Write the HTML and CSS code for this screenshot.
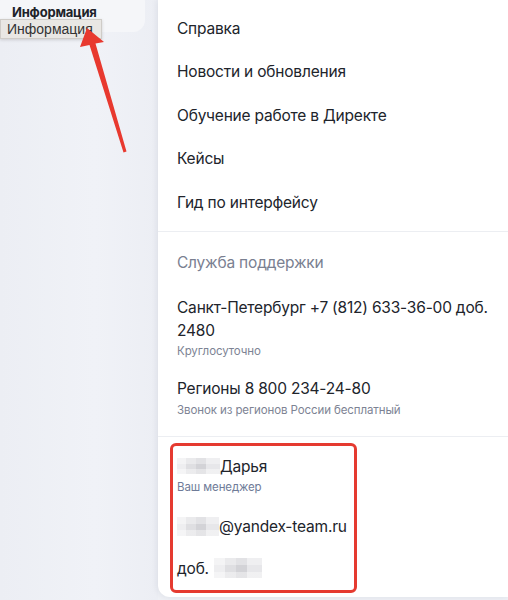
FILE: index.html
```html
<!DOCTYPE html>
<html lang="ru">
<head>
<meta charset="utf-8">
<title>Информация</title>
<link rel="stylesheet" href="styles.css">
</head>
<body>
<div class="page">
  <aside class="sidebar">
    <div class="side-item">Информация</div>
  </aside>
  <main class="menu">
    <ul class="links">
      <li>Справка</li>
      <li>Новости и обновления</li>
      <li>Обучение работе в Директе</li>
      <li>Кейсы</li>
      <li>Гид по интерфейсу</li>
    </ul>
    <div class="divider"></div>
    <section class="support">
      <div class="section-title">Служба поддержки</div>
      <div class="contact">
        <div class="phone">Санкт-Петербург +7 (812) 633-36-00 доб. 2480</div>
        <div class="note">Круглосуточно</div>
      </div>
      <div class="contact">
        <div class="phone">Регионы 8 800 234-24-80</div>
        <div class="note">Звонок из регионов России бесплатный</div>
      </div>
    </section>
    <div class="divider"></div>
    <section class="manager">
      <div class="mgr-name"><span class="blur blur-name"></span>Дарья</div>
      <div class="note note-mgr">Ваш менеджер</div>
      <div class="mgr-line mgr-mail"><span class="blur blur-mail"></span>@yandex-team.ru</div>
      <div class="mgr-line mgr-ext">доб.<span class="blur blur-ext"></span></div>
    </section>
  </main>
  <div class="tooltip">Информация</div>
  <svg class="arrow" width="140" height="160" viewBox="0 0 140 160">
    <polygon points="87,28 104,42 95.5,43.5 126.5,151.5 123.5,152.5 89.5,45 80,47" fill="#e8392f"/>
  </svg>
</div>
</body>
</html>
```
FILE: styles.css
```css
* { box-sizing: border-box; }
html, body { margin: 0; padding: 0; }
body {
  background: #eef0f5;
  font-family: Inter, "Noto Sans", sans-serif;
  color: #21242b;
  width: 508px;
  height: 600px;
  overflow: hidden;
}
.page {
  position: relative;
  display: flex;
  height: 600px;
}
.sidebar {
  width: 158px;
  flex: none;
  background: linear-gradient(90deg, #eceef4 0%, #f0f2f7 60%, #eceef4 100%);
}
.side-item {
  width: 145px;
  height: 42px;
  margin-top: -10px;
  padding: 13px 0 0 12px;
  background: #f5f6f9;
  border-radius: 12px;
  font-size: 13px;
  font-weight: 700;
  letter-spacing: -0.2px;
  line-height: 18px;
  color: #20232a;
}
.menu {
  flex: 1;
  background: #fff;
  margin-bottom: 3px;
  border-radius: 0 0 0 12px;
  box-shadow: -1px 0 6px rgba(30, 40, 70, 0.08);
  padding-top: 7px;
}
.links {
  list-style: none;
  margin: 0;
  padding: 0 0 7px 19px;
}
.links li {
  height: 43.4px;
  line-height: 43.4px;
  font-size: 15.5px;
  letter-spacing: -0.2px;
}
.divider {
  height: 1px;
  background: #eceef2;
}
.support {
  padding: 19px 0 17px 19px;
}
.section-title {
  font-size: 15.5px;
  letter-spacing: -0.2px;
  line-height: 24px;
  color: #7a8091;
  margin-bottom: 21px;
}
.phone {
  font-size: 15.5px;
  letter-spacing: -0.2px;
  line-height: 23px;
}
.note {
  font-size: 11.5px;
  letter-spacing: -0.1px;
  line-height: 18px;
  color: #7d8394;
}
.contact + .contact { margin-top: 17px; }
.contact + .contact .note { margin-top: 1px; }
.manager {
  margin: 6px 0 0 12px;
  width: 187px;
  height: 150px;
  border: 3px solid #e53a30;
  border-radius: 6px;
  padding: 9px 0 0 4px;
}
.mgr-name, .mgr-line {
  font-size: 15.5px;
  letter-spacing: -0.2px;
  line-height: 23px;
  display: flex;
  align-items: center;
}
.note-mgr { color: #6f7b98; }
.mgr-mail { margin-top: 19px; }
.mgr-ext { margin-top: 19px; }
.blur {
  display: inline-block;
  background:
    linear-gradient(180deg, rgba(255,255,255,0.35) 0 35%, rgba(0,0,0,0) 35% 70%, rgba(255,255,255,0.4) 70%),
    linear-gradient(90deg, #eeeef0 0 22%, #dfdfe2 22% 45%, #d3d3d7 45% 68%, #e7e7ea 68%);
}
.blur-name { width: 43px; height: 16px; }
.blur-mail { width: 42px; height: 19px; }
.blur-ext { width: 48px; height: 20px; margin-left: 5px; }
.tooltip {
  position: absolute;
  left: 0;
  top: 19px;
  width: 102px;
  height: 20px;
  background: #e9e7e4;
  border: 1px solid #cfccc8;
  box-shadow: 0 1px 3px rgba(0,0,0,0.15);
  font-family: "Liberation Sans", Arial, sans-serif;
  font-size: 14px;
  line-height: 18px;
  padding-left: 6px;
  color: #333;
}
.arrow {
  position: absolute;
  left: 0;
  top: 0;
}
```
